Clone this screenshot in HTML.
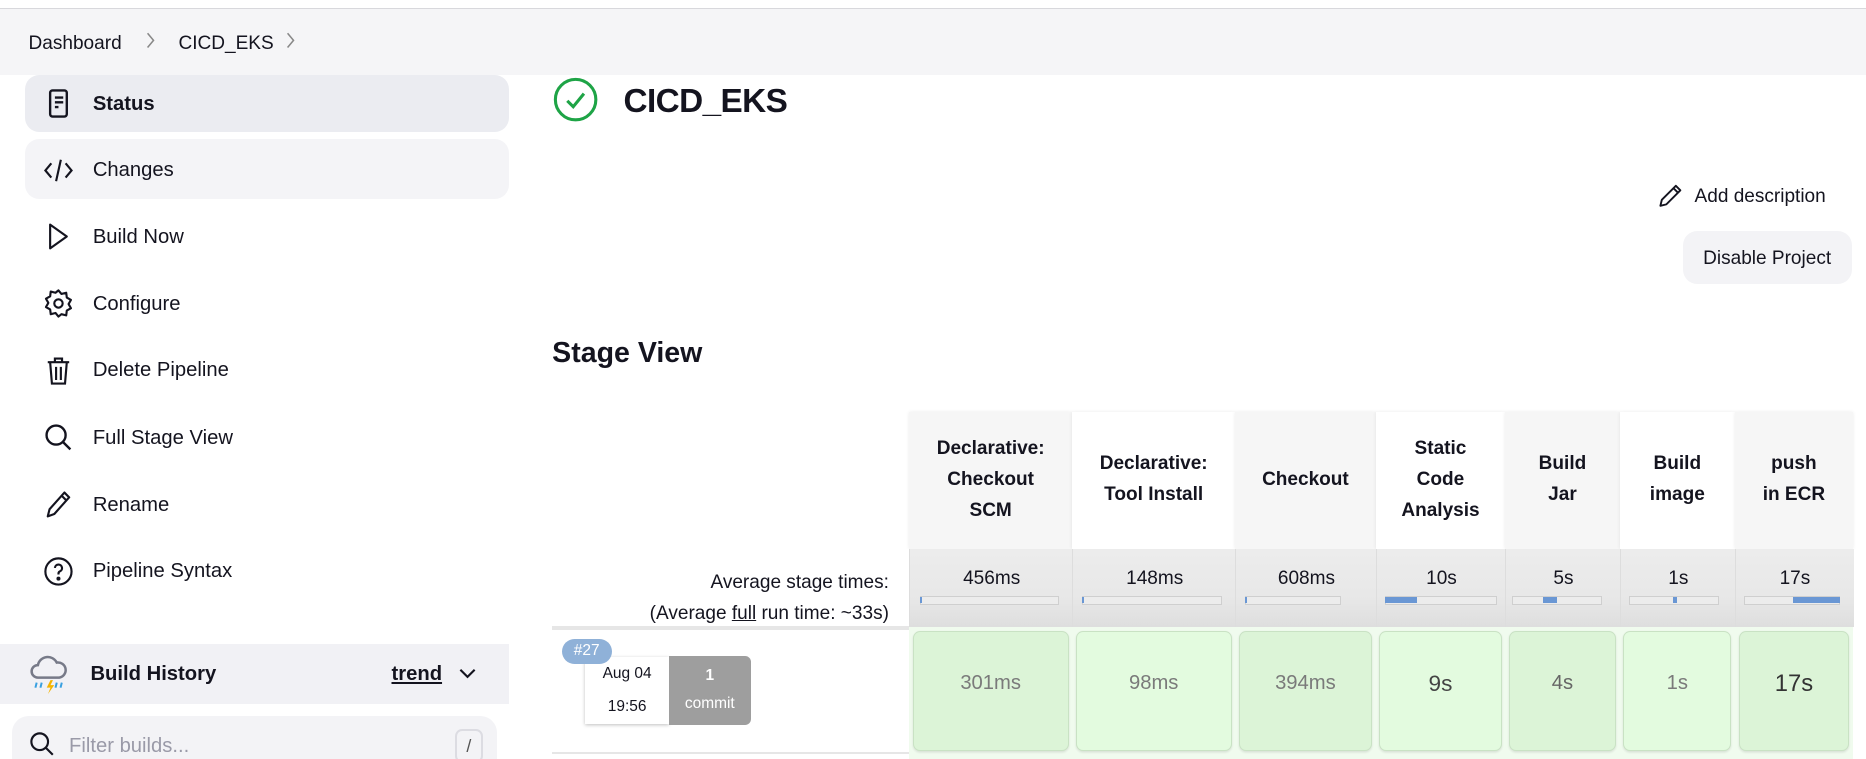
<!DOCTYPE html>
<html><head><meta charset="utf-8"><style>
html,body{margin:0;padding:0;background:#fff;overflow:hidden}
#w{position:relative;width:1568px;height:638px;zoom:1.19;font-family:"Liberation Sans",sans-serif;color:#14141f}
.a{position:absolute}
.top{left:0;top:0;width:1568px;height:63px;background:#f5f5f7;border-top:7px solid #fff;box-sizing:border-box}
.top:before{content:"";position:absolute;left:0;top:0;width:100%;height:1px;background:#d8d8dc}
.bc{top:28px;font-size:16px}
.chev{top:27px;width:10px;height:14px}
.it{left:21px;width:407px;height:48px;border-radius:12px}
.lbl{left:78px;font-size:17px;line-height:20px}
.ic{left:36px;width:26px;height:26px}
.th{top:346px;height:115px;display:flex;align-items:center;justify-content:center;text-align:center;font-weight:bold;font-size:16px;line-height:26px;box-shadow:0 0 3px rgba(0,0,0,.08)}
.av{top:461px;height:66px;background:linear-gradient(#ececec,#e8e8e8 60%,#dedede);border-left:1px solid #ddd}
.av .t{position:absolute;top:16px;width:100%;text-align:center;font-size:16px}
.av .bar{position:absolute;top:40px;height:7px;background:#ececec;border:1px solid #cfcfcf;box-sizing:border-box}
.av .f{position:absolute;top:41px;height:5px;background:#6a97d4}
.cell{top:530px;height:101px;border:1px solid #c9e2c4;border-radius:6px;box-sizing:border-box;display:flex;align-items:center;justify-content:center;font-size:17px;color:#7a7a7a;box-shadow:0 1px 2px rgba(0,0,0,.1);padding-bottom:12px}
</style></head><body><div id="w">
<div class="a top"></div>
<div class="a bc" style="left:24px">Dashboard</div>
<svg class="a chev" style="left:121px" viewBox="0 0 10 14" fill="none" stroke="#888" stroke-width="1.3"><path d="M3 1l5 6-5 6"/></svg>
<div class="a bc" style="left:150px">CICD_EKS</div>
<svg class="a chev" style="left:239px" viewBox="0 0 10 14" fill="none" stroke="#888" stroke-width="1.3"><path d="M3 1l5 6-5 6"/></svg>

<div class="a it" style="top:63px;background:#ebecf1"></div>
<div class="a it" style="top:117px;height:50px;background:#f4f4f7"></div>
<svg class="a ic" style="top:74px" viewBox="0 0 26 26" fill="none" stroke="#14141f" stroke-width="2"><rect x="6" y="2" width="14" height="22" rx="2"/><path d="M10 8h7M10 12h7M10 16h3"/></svg>
<div class="a lbl" style="top:78px;font-weight:bold">Status</div>
<svg class="a ic" style="top:130px" viewBox="0 0 26 26" fill="none" stroke="#14141f" stroke-width="1.8"><path d="M7 7l-5 6 5 6M19 7l5 6-5 6M15 4l-4 18"/></svg>
<div class="a lbl" style="top:134px">Changes</div>
<svg class="a ic" style="top:186px" viewBox="0 0 26 26" fill="none" stroke="#14141f" stroke-width="1.8"><path d="M6 3v20l14-10z" stroke-linejoin="round"/></svg>
<div class="a lbl" style="top:190px">Build Now</div>
<svg class="a ic" style="top:242px" viewBox="0 0 26 26" fill="none" stroke="#14141f" stroke-width="1.8"><circle cx="13" cy="13" r="3.5"/><path d="M13 2l2.5 3 4-1 .5 4 3.5 2-2 3.5 2 3.5-3.5 2-.5 4-4-1L13 24l-2.5-3-4 1-.5-4-3.5-2 2-3.5-2-3.5 3.5-2 .5-4 4 1z" stroke-linejoin="round"/></svg>
<div class="a lbl" style="top:246px">Configure</div>
<svg class="a ic" style="top:298px" viewBox="0 0 26 26" fill="none" stroke="#14141f" stroke-width="1.8"><path d="M4 6h18M10 6V3h6v3M6 6l1.5 18h11L20 6M11 10v11M15 10v11"/></svg>
<div class="a lbl" style="top:302px">Delete Pipeline</div>
<svg class="a ic" style="top:355px" viewBox="0 0 26 26" fill="none" stroke="#14141f" stroke-width="2"><circle cx="11" cy="11" r="8"/><path d="M17 17l6 6"/></svg>
<div class="a lbl" style="top:359px">Full Stage View</div>
<svg class="a ic" style="top:411px" viewBox="0 0 26 26" fill="none" stroke="#14141f" stroke-width="1.8"><path d="M4 23l1.5-6L18 3l4 4L9.5 21z M15.5 5.5l4 4" stroke-linejoin="round"/></svg>
<div class="a lbl" style="top:415px">Rename</div>
<svg class="a ic" style="top:467px" viewBox="0 0 26 26" fill="none" stroke="#14141f" stroke-width="1.8"><circle cx="13" cy="13" r="11"/><path d="M10 10a3 3 0 1 1 4 3c-1 .5-1 1.2-1 2.5"/><circle cx="13" cy="19" r=".8" fill="#14141f"/></svg>
<div class="a lbl" style="top:471px">Pipeline Syntax</div>

<div class="a" style="left:0;top:541px;width:428px;height:51px;background:#f1f1f5"></div>
<svg class="a" style="left:24px;top:546px" width="34" height="38" viewBox="0 0 32 36" fill="none"><path d="M7 22a5 5 0 0 1 0-10 8 8 0 0 1 15-2 6 6 0 0 1 2 12z" stroke="#777a88" stroke-width="2"/><path d="M6 26l-1 4M10 26l-1 4M22 26l-1 4M26 26l-1 4" stroke="#39a0e0" stroke-width="1.6"/><path d="M17 24l-3 6h3l-2 5 5-7h-3l2-4z" fill="#f4b400"/></svg>
<div class="a" style="left:76px;top:557px;font-weight:bold;font-size:17px">Build History</div>
<div class="a" style="left:329px;top:557px;font-weight:bold;font-size:17px;text-decoration:underline">trend</div>
<svg class="a" style="left:385px;top:559px" width="16" height="14" viewBox="0 0 16 14" fill="none" stroke="#14141f" stroke-width="1.8"><path d="M2 4l6 6 6-6"/></svg>
<div class="a" style="left:10px;top:602px;width:408px;height:50px;border-radius:14px;background:#f3f3f6"></div>
<svg class="a" style="left:24px;top:614px" width="22" height="22" viewBox="0 0 22 22" fill="none" stroke="#14141f" stroke-width="1.8"><circle cx="9" cy="9" r="7"/><path d="M14 14l6 6"/></svg>
<div class="a" style="left:58px;top:618px;font-size:17px;color:#9a9aa8">Filter builds...</div>
<div class="a" style="left:382px;top:613px;width:24px;height:28px;border:2px solid #dcdce2;border-radius:6px;box-sizing:border-box;text-align:center;font-size:15px;line-height:26px;color:#555">/</div>

<svg class="a" style="left:465px;top:65px" width="38" height="38" viewBox="0 0 38 38" fill="none" stroke="#1ea446" stroke-width="2.6"><circle cx="19" cy="19" r="17"/><path d="M12 20l5 5 9-11"/></svg>
<div class="a" style="left:524px;top:70px;font-size:28px;font-weight:bold;letter-spacing:-0.5px">CICD_EKS</div>
<svg class="a" style="left:1393px;top:153px" width="22" height="22" viewBox="0 0 22 22" fill="none" stroke="#14141f" stroke-width="1.6"><path d="M2 20l1.2-5L15 3.2l3.8 3.8L7 18.8z M13 5.2l3.8 3.8" stroke-linejoin="round"/></svg>
<div class="a" style="left:1424px;top:156px;font-size:16px">Add description</div>
<div class="a" style="left:1414px;top:194px;width:142px;height:45px;border-radius:12px;background:#f3f3f6;text-align:center;line-height:47px;font-size:16px">Disable Project</div>
<div class="a" style="left:464px;top:283px;font-size:24px;font-weight:bold">Stage View</div>

<div class="a th" style="left:764px;width:137px;background:#f6f6f6">Declarative:<br>Checkout<br>SCM</div>
<div class="a th" style="left:901px;width:137px;background:#fff">Declarative:<br>Tool Install</div>
<div class="a th" style="left:1038px;width:118px;background:#f6f6f6">Checkout</div>
<div class="a th" style="left:1156px;width:109px;background:#fff">Static<br>Code<br>Analysis</div>
<div class="a th" style="left:1265px;width:96px;background:#f6f6f6">Build<br>Jar</div>
<div class="a th" style="left:1361px;width:97px;background:#fff">Build<br>image</div>
<div class="a th" style="left:1458px;width:99px;background:#f6f6f6">push<br>in ECR</div>

<div class="a" style="left:464px;top:461px;width:300px;height:66px;background:#fff"></div>
<div class="a" style="left:464px;top:477px;width:283px;text-align:right;font-size:16px;line-height:26px">Average stage times:<br>(Average <u>full</u> run time: ~33s)</div>
<div class="a" style="left:464px;top:526px;width:300px;height:3px;background:#e6e6e6"></div>

<div class="a av" style="left:764px;width:137px"><div class="t">456ms</div><div class="bar" style="left:8px;width:117px"></div><div class="f" style="left:8px;width:2px"></div></div>
<div class="a av" style="left:901px;width:137px"><div class="t">148ms</div><div class="bar" style="left:7px;width:118px"></div><div class="f" style="left:7px;width:2px"></div></div>
<div class="a av" style="left:1038px;width:118px"><div class="t">608ms</div><div class="bar" style="left:7px;width:81px"></div><div class="f" style="left:7px;width:2px"></div></div>
<div class="a av" style="left:1156px;width:109px"><div class="t">10s</div><div class="bar" style="left:7px;width:94px"></div><div class="f" style="left:7px;width:27px"></div></div>
<div class="a av" style="left:1265px;width:96px"><div class="t">5s</div><div class="bar" style="left:5px;width:75px"></div><div class="f" style="left:31px;width:12px"></div></div>
<div class="a av" style="left:1361px;width:97px"><div class="t">1s</div><div class="bar" style="left:7px;width:76px"></div><div class="f" style="left:44px;width:3px"></div></div>
<div class="a av" style="left:1458px;width:99px"><div class="t">17s</div><div class="bar" style="left:7px;width:80px"></div><div class="f" style="left:48px;width:39px"></div></div>

<div class="a" style="left:764px;top:527px;width:793px;height:111px;background:#f0fbee"></div>
<div class="a" style="left:464px;top:632px;width:300px;height:2px;background:#e6e6e6"></div>
<div class="a" style="left:492px;top:552px;width:70px;height:56px;background:#fff;box-shadow:0 1px 3px rgba(0,0,0,.25);text-align:center;font-size:13px;line-height:28px">Aug 04<br>19:56</div>
<div class="a" style="left:562px;top:551px;width:69px;height:58px;background:#9e9e9e;border-radius:0 5px 5px 0;color:#fff;text-align:center;font-size:13px;line-height:24px;padding-top:5px;box-sizing:border-box"><b>1</b><br>commit</div>
<div class="a" style="left:472px;top:537px;width:42px;height:21px;border-radius:11px;background:#8fb1d8;color:#fff;font-size:13px;text-align:center;line-height:21px">#27</div>

<div class="a cell" style="left:767px;width:131px;background:#dcf4d7">301ms</div>
<div class="a cell" style="left:904px;width:131px;background:#e3fbdf">98ms</div>
<div class="a cell" style="left:1041px;width:112px;background:#dcf4d7">394ms</div>
<div class="a cell" style="left:1159px;width:103px;background:#e3fbdf;color:#444;font-size:19px">9s</div>
<div class="a cell" style="left:1268px;width:90px;background:#dcf4d7;color:#666">4s</div>
<div class="a cell" style="left:1364px;width:91px;background:#e3fbdf">1s</div>
<div class="a cell" style="left:1461px;width:93px;background:#dcf4d7;color:#333;font-size:20px">17s</div>
</div></body></html>
